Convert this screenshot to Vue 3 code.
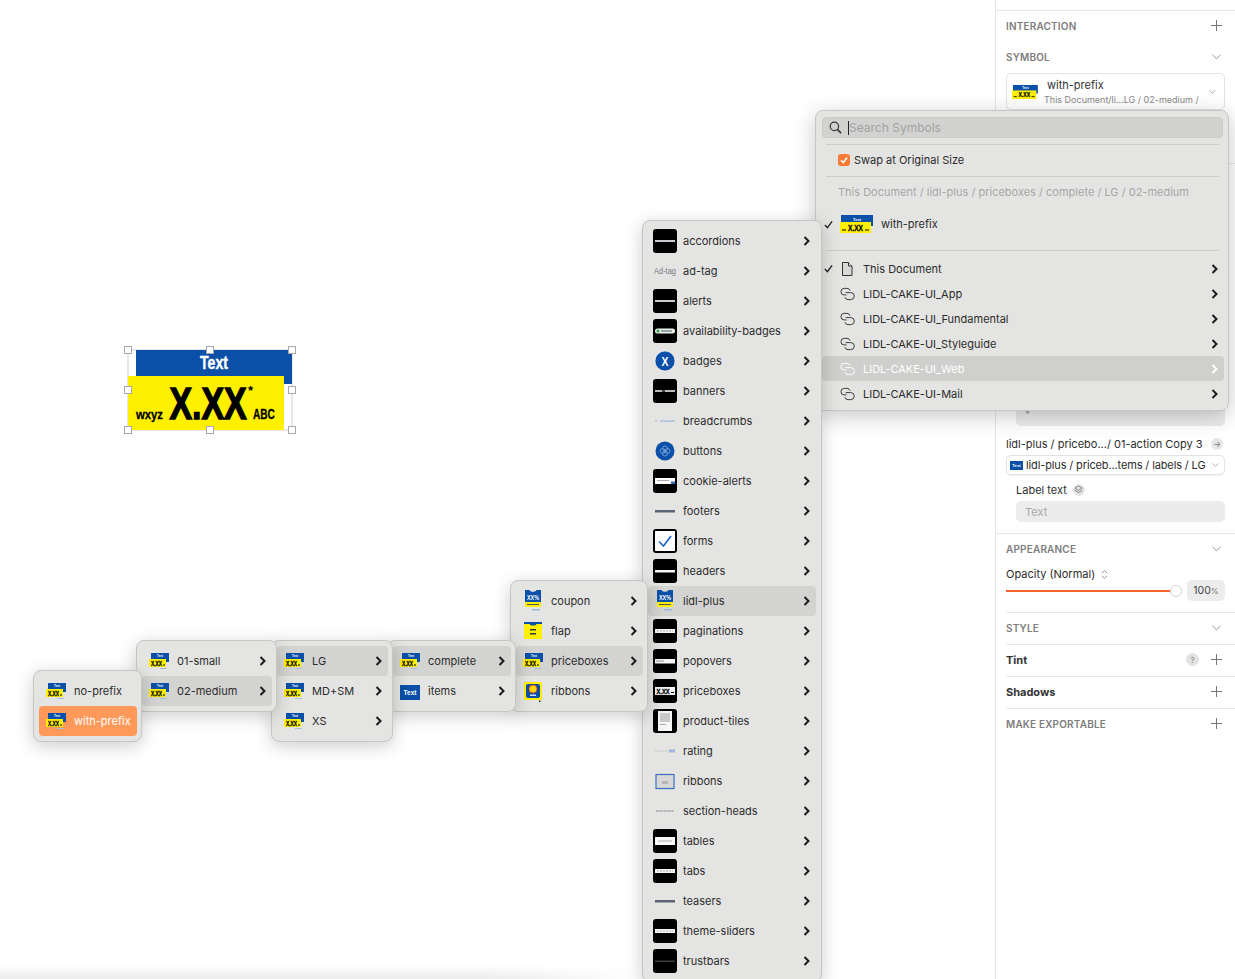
<script setup>
const menus = [
  { cls: 'm6', items: [
    ['accordions', 'blk-line'], ['ad-tag', 'adtag'], ['alerts', 'blk-line'], ['availability-badges', 'blk-badge'],
    ['badges', 'circle-x'], ['banners', 'blk-banner'], ['breadcrumbs', 'crumbs'], ['buttons', 'circle-btn'],
    ['cookie-alerts', 'blk-cookie'], ['footers', 'bar'], ['forms', 'blk-check'], ['headers', 'blk-head'],
    ['lidl-plus', 'coupon', true], ['paginations', 'blk-dash'], ['popovers', 'blk-pop'], ['priceboxes', 'blk-price'],
    ['product-tiles', 'blk-tile'], ['rating', 'rating'], ['ribbons', 'frame'], ['section-heads', 'sect'],
    ['tables', 'blk-table'], ['tabs', 'blk-dash'], ['teasers', 'bar'], ['theme-sliders', 'blk-dash'], ['trustbars', 'blk-dark'],
  ] },
  { cls: 'm5', items: [['coupon', 'coupon'], ['flap', 'flap'], ['priceboxes', 'pb', true], ['ribbons', 'ribbon']] },
  { cls: 'm4', items: [['complete', 'pb', true], ['items', 'label']] },
  { cls: 'm3', items: [['LG', 'pb', true], ['MD+SM', 'pb'], ['XS', 'pb']] },
  { cls: 'm2', items: [['01-small', 'pb'], ['02-medium', 'pb', true]] },
]
const libraries = ['LIDL-CAKE-UI_App', 'LIDL-CAKE-UI_Fundamental', 'LIDL-CAKE-UI_Styleguide', 'LIDL-CAKE-UI_Web', 'LIDL-CAKE-UI-Mail']
const handles = [[8, 8], [90, 8], [172, 8], [8, 48], [172, 48], [8, 88], [90, 88], [172, 88]]
</script>

<template>
  <div class="screen">
    <svg class="defs" aria-hidden="true">
      <symbol id="pb" viewBox="0 0 24 24">
        <rect x="4" y="4" width="18" height="9" fill="#0a50a8" />
        <text x="13" y="8.400" font-size="3" fill="#fff" text-anchor="middle" font-family="Liberation Sans" font-weight="700">Text</text>
        <rect x="2" y="10" width="17" height="8" fill="#fff000" />
        <text x="9.500" y="16.600" font-size="6.500" fill="#000" stroke="#000" stroke-width=".3" text-anchor="middle" font-family="Liberation Sans" font-weight="700" textLength="11" lengthAdjust="spacingAndGlyphs">X.XX</text>
        <rect x="16" y="15.500" width="2" height="1" fill="#000" />
        <rect x="13" y="19" width="7" height="1" fill="#a9bfdf" />
      </symbol>
      <symbol id="pbw" viewBox="0 0 33 18">
        <rect x="1" y="0" width="32" height="11" fill="#0a50a8" />
        <text x="17" y="5.500" font-size="4" fill="#fff" text-anchor="middle" font-family="Liberation Sans" font-weight="700">Text</text>
        <rect x="0" y="7" width="31" height="11" fill="#fff000" />
        <text x="15.500" y="16" font-size="9" fill="#000" stroke="#000" stroke-width=".3" text-anchor="middle" font-family="Liberation Sans" font-weight="700" textLength="15" lengthAdjust="spacingAndGlyphs">X.XX</text>
        <rect x="2" y="14.500" width="4" height="1" fill="#000" />
        <rect x="25" y="14.500" width="4" height="1" fill="#000" />
      </symbol>
      <symbol id="coupon" viewBox="0 0 24 24">
        <path d="M4 1h4.500c.6 2.400 6.400 2.400 7 0H20v14H4z" fill="#0a50a8" />
        <text x="12" y="11" font-size="6.500" fill="#fff" text-anchor="middle" font-family="Liberation Sans" font-weight="700" textLength="12" lengthAdjust="spacingAndGlyphs">XX%</text>
        <rect x="4" y="13" width="16" height="5" fill="#fff000" />
        <rect x="6" y="15" width="12" height="1" fill="#555" />
        <rect x="11" y="20" width="8" height="1.500" fill="#9db7dc" />
      </symbol>
      <symbol id="flap" viewBox="0 0 24 24">
        <rect x="3" y="3" width="18" height="17" fill="#fff000" />
        <path d="M3 3h18v2h-5.500c-.6 2-6.400 2-7 0H3z" fill="#0a50a8" />
        <rect x="9" y="10" width="6" height="1.500" fill="#333" />
        <rect x="9" y="14" width="6" height="1.500" fill="#333" />
      </symbol>
      <symbol id="ribbon" viewBox="0 0 24 24">
        <rect x="3" y="3" width="18" height="18" rx="1" fill="#fff000" />
        <rect x="5" y="5" width="14" height="14" rx="2" fill="#0a50a8" />
        <circle cx="12" cy="10" r="4" fill="#ffd800" stroke="#d22" stroke-width=".6" />
        <rect x="9" y="15.500" width="6" height="1.500" fill="#cfe0f5" />
        <rect x="18" y="21.500" width="1.500" height="1.500" fill="#222" />
      </symbol>
      <symbol id="label" viewBox="0 0 24 24">
        <rect x="2" y="6" width="20" height="15" fill="#0a50a8" />
        <text x="12" y="15.500" font-size="6.500" fill="#fff" text-anchor="middle" font-family="Liberation Sans" font-weight="700">Text</text>
      </symbol>
      <symbol id="adtag" viewBox="0 0 24 24">
        <text x="12" y="15" font-size="8.500" fill="#77797f" text-anchor="middle" font-family="Liberation Sans" textLength="22" lengthAdjust="spacingAndGlyphs">Ad-tag</text>
      </symbol>
      <symbol id="blk-line" viewBox="0 0 24 24">
        <rect width="24" height="24" rx="3" fill="#000" />
        <rect x="2" y="11" width="20" height="2" fill="#c9cbd0" />
      </symbol>
      <symbol id="blk-badge" viewBox="0 0 24 24">
        <rect width="24" height="24" rx="3" fill="#000" />
        <rect x="2" y="9.500" width="20" height="5" rx="2.500" fill="#eaf3ea" />
        <circle cx="5" cy="12" r="1.500" fill="#2d9a52" />
        <rect x="8" y="11.500" width="11" height="1" fill="#456" />
      </symbol>
      <symbol id="blk-banner" viewBox="0 0 24 24">
        <rect width="24" height="24" rx="3" fill="#000" />
        <rect x="2" y="11" width="20" height="2" fill="#bbb" />
        <rect x="9" y="11" width="3" height="2" fill="#444" />
      </symbol>
      <symbol id="blk-cookie" viewBox="0 0 24 24">
        <rect width="24" height="24" rx="3" fill="#000" />
        <rect x="2" y="9" width="20" height="6" fill="#fff" />
        <rect x="4" y="11" width="12" height="1" fill="#aaa" />
        <rect x="18" y="12.500" width="4" height="2.500" fill="#3a70b8" />
      </symbol>
      <symbol id="blk-check" viewBox="0 0 24 24">
        <rect width="24" height="24" rx="3" fill="#000" />
        <rect x="2" y="2" width="20" height="20" fill="#fff" />
        <path d="M6 12.500l4.500 4.500L18 7" fill="none" stroke="#1864c8" stroke-width="1.600" />
      </symbol>
      <symbol id="blk-head" viewBox="0 0 24 24">
        <rect width="24" height="24" rx="3" fill="#000" />
        <rect x="2" y="11" width="20" height="2.500" fill="#f4f4f4" />
      </symbol>
      <symbol id="blk-dash" viewBox="0 0 24 24">
        <rect width="24" height="24" rx="3" fill="#000" />
        <rect x="2" y="10" width="20" height="4" fill="#f4f4f4" />
        <path d="M4 12h16" stroke="#999" stroke-width=".8" stroke-dasharray="2 1" />
      </symbol>
      <symbol id="blk-pop" viewBox="0 0 24 24">
        <rect width="24" height="24" rx="3" fill="#000" />
        <rect x="2" y="10" width="20" height="4.500" fill="#f4f4f4" />
        <rect x="3" y="11.500" width="8" height="1" fill="#999" />
      </symbol>
      <symbol id="blk-price" viewBox="0 0 24 24">
        <rect width="24" height="24" rx="3" fill="#000" />
        <rect x="2" y="8" width="20" height="8" fill="#f4f4f4" />
        <text x="10" y="14.500" font-size="6.500" fill="#000" stroke="#000" stroke-width=".3" text-anchor="middle" font-family="Liberation Sans" font-weight="700" textLength="13" lengthAdjust="spacingAndGlyphs">X.XX</text>
        <rect x="18" y="13" width="3" height="1" fill="#000" />
      </symbol>
      <symbol id="blk-tile" viewBox="0 0 24 24">
        <rect width="24" height="24" rx="3" fill="#000" />
        <rect x="5" y="2" width="14" height="20" fill="#f6f6f6" />
        <rect x="7" y="4" width="10" height="9" fill="#c9c9c9" />
        <rect x="7" y="15" width="6" height="1" fill="#aaa" />
      </symbol>
      <symbol id="blk-table" viewBox="0 0 24 24">
        <rect width="24" height="24" rx="3" fill="#000" />
        <rect x="2" y="8" width="20" height="8" fill="#f8f8f8" />
        <rect x="5" y="11.500" width="14" height="1" fill="#aaa" />
      </symbol>
      <symbol id="blk-dark" viewBox="0 0 24 24">
        <rect width="24" height="24" rx="3" fill="#000" />
        <rect x="2" y="11.500" width="20" height="1.500" fill="#3c3c3c" />
      </symbol>
      <symbol id="circle-x" viewBox="0 0 24 24">
        <circle cx="12" cy="12" r="10" fill="#0a50a8" stroke="#fff" stroke-width=".6" />
        <text x="12" y="16.500" font-size="12" fill="#fff" text-anchor="middle" font-family="Liberation Sans" font-weight="700" textLength="7" lengthAdjust="spacingAndGlyphs">X</text>
      </symbol>
      <symbol id="circle-btn" viewBox="0 0 24 24">
        <circle cx="12" cy="12" r="9.500" fill="#0a50a8" />
        <circle cx="12" cy="9.500" r="2.500" fill="none" stroke="#7ea6dc" stroke-width=".8" />
        <circle cx="12" cy="14.500" r="2.500" fill="none" stroke="#7ea6dc" stroke-width=".8" />
        <circle cx="9.500" cy="12" r="2.500" fill="none" stroke="#7ea6dc" stroke-width=".8" />
        <circle cx="14.500" cy="12" r="2.500" fill="none" stroke="#7ea6dc" stroke-width=".8" />
      </symbol>
      <symbol id="crumbs" viewBox="0 0 24 24">
        <rect x="2" y="11.500" width="2" height="1.200" fill="#b9bcc2" />
        <rect x="7" y="11.500" width="15" height="1.200" fill="#9db7dc" />
      </symbol>
      <symbol id="bar" viewBox="0 0 24 24">
        <rect x="2" y="11" width="20" height="2.500" fill="#5a6472" />
      </symbol>
      <symbol id="rating" viewBox="0 0 24 24">
        <path d="M2 12h13" stroke="#c0c2c8" stroke-width="1" stroke-dasharray="1.500 1" />
        <rect x="16" y="10.500" width="6" height="3" fill="#9db7dc" />
      </symbol>
      <symbol id="frame" viewBox="0 0 24 24">
        <rect x="3" y="5.500" width="18" height="14" fill="#d8d8d8" stroke="#3a70b8" stroke-width="1.200" />
        <rect x="9" y="12" width="6" height="3" fill="#b5b5b5" />
      </symbol>
      <symbol id="sect" viewBox="0 0 24 24">
        <path d="M3 12h18" stroke="#85878c" stroke-width="1.200" stroke-dasharray="2 .6" />
      </symbol>
      <symbol id="chev" viewBox="0 0 8 10">
        <path d="M1.500 1l4 4-4 4" fill="none" stroke="currentColor" stroke-width="2" />
      </symbol>
      <symbol id="link" viewBox="0 0 16 14">
        <path d="M7 8H4.500a3.500 3.500 0 0 1 0-7h3a3.500 3.500 0 0 1 3.300 2.400" fill="none" stroke="currentColor" stroke-width="1" />
        <path d="M6 5.500h5.500a3.750 3.750 0 0 1 0 7.500h-3a3.500 3.500 0 0 1-3.300-2.500" fill="none" stroke="currentColor" stroke-width="1" />
      </symbol>
      <symbol id="plus" viewBox="0 0 11 11">
        <path d="M5.500 0v11M0 5.500h11" fill="none" stroke="currentColor" stroke-width="1" />
      </symbol>
      <symbol id="down" viewBox="0 0 10 6">
        <path d="M.5.500L5 5 9.500.500" fill="none" stroke="currentColor" stroke-width="1" />
      </symbol>
      <symbol id="tick" viewBox="0 0 10 10">
        <path d="M1 5.500l2.800 3L9 1.500" fill="none" stroke="currentColor" stroke-width="1.500" />
      </symbol>
    </svg>

    <main class="canvas">
      <svg class="artboard" width="190" height="100" viewBox="0 0 190 100">
        <rect x="8" y="8" width="164" height="80" fill="#fff" stroke="#cfcfcf" />
        <rect x="16" y="8" width="156" height="34" fill="#0a50a8" />
        <text transform="translate(94 27) scale(.78 1)" font-size="18" fill="#fff" stroke="#fff" stroke-width=".4" text-anchor="middle" font-family="Liberation Sans" font-weight="700">Text</text>
        <rect x="8" y="34" width="156" height="54" fill="#fff000" />
        <text transform="translate(88 77) scale(.77 1)" font-size="44" fill="#000" stroke="#000" stroke-width="1.400" text-anchor="middle" font-family="Liberation Sans" font-weight="700">X.XX</text>
        <text transform="translate(16 77) scale(.87 1)" font-size="13" fill="#000" stroke="#000" stroke-width=".3" font-family="Liberation Sans" font-weight="700">wxyz</text>
        <text transform="translate(133 77) scale(.72 1)" font-size="14" fill="#000" stroke="#000" stroke-width=".3" font-family="Liberation Sans" font-weight="700">ABC</text>
        <text x="128" y="53" font-size="13" fill="#000" font-family="Liberation Sans" font-weight="700">*</text>
        <rect v-for="(h, i) in handles" :key="i" :x="h[0] - 3.500" :y="h[1] - 3.500" width="7" height="7" fill="#fff" stroke="#a8a8a8" />
      </svg>
      <div class="floor"></div>
    </main>

    <aside class="panel">
      <div class="sec first row"><span class="head">Interaction</span><svg class="plus"><use href="#plus" /></svg></div>
      <div class="sec-sym">
        <div class="row sym-head"><span class="head">Symbol</span><svg class="down"><use href="#down" /></svg></div>
        <div class="sym-box">
          <svg class="sym-thumb"><use href="#pbw" /></svg>
          <div class="sym-text"><span class="sym-name">with-prefix</span><span class="sym-path">This Document/li...LG / 02-medium /</span></div>
          <svg class="mini-down"><use href="#down" /></svg>
        </div>
      </div>
      <div class="hidden-sec">
        <div class="star-box">*</div>
      </div>
      <div class="over">
        <div class="over-row"><span>lidl-plus / pricebo.../ 01-action Copy 3</span><span class="round">→</span></div>
        <div class="over-select">
          <svg class="lab-thumb" viewBox="2 6 20 15" preserveAspectRatio="none"><use href="#label" width="24" height="24" /></svg>
          <span class="over-val">lidl-plus / priceb...tems / labels / LG</span>
          <svg class="mini-down"><use href="#down" /></svg>
        </div>
        <div class="label-row"><span>Label text</span>
          <span class="round"><svg class="layers" viewBox="0 0 10 10"><path d="M5 1l4 2.500-4 2.500-4-2.500zM1 6l4 2.500L9 6" fill="none" stroke="#777" stroke-width="1" /></svg></span>
        </div>
        <div class="text-input">Text</div>
      </div>
      <div class="appear">
        <div class="row app-head"><span class="head">Appearance</span><svg class="down"><use href="#down" /></svg></div>
        <div class="opacity">Opacity (Normal)
          <svg class="updown" viewBox="0 0 8 12"><path d="M1 4.500L4 1.500l3 3M1 7.500l3 3 3-3" fill="none" stroke="#888" stroke-width="1" /></svg>
        </div>
        <div class="slider-row">
          <div class="track"><span class="knob"></span></div>
          <div class="percent">100<small>%</small></div>
        </div>
      </div>
      <div class="sec row"><span class="head">Style</span><svg class="down"><use href="#down" /></svg></div>
      <div class="sec row"><span class="strong">Tint</span><span class="right"><span class="help">?</span><svg class="plus"><use href="#plus" /></svg></span></div>
      <div class="sec row"><span class="strong">Shadows</span><svg class="plus"><use href="#plus" /></svg></div>
      <div class="sec row"><span class="head">Make Exportable</span><svg class="plus"><use href="#plus" /></svg></div>
    </aside>

    <section class="popover">
      <div class="search">
        <svg class="lens" viewBox="0 0 14 14"><circle cx="5.800" cy="5.800" r="4.500" fill="none" stroke="#333" stroke-width="1.300" /><path d="M9 9l4 4" stroke="#333" stroke-width="1.700" /></svg>
        <i class="caret"></i><span>Search Symbols</span>
      </div>
      <div class="rule"></div>
      <div class="swap">
        <span class="checkbox"><svg viewBox="0 0 12 12"><path d="M3 6.200l2.200 2.300L9.200 3.500" fill="none" stroke="#fff" stroke-width="1.500" /></svg></span>
        Swap at Original Size
      </div>
      <div class="rule"></div>
      <div class="crumb">This Document / lidl-plus / priceboxes / complete / LG / 02-medium</div>
      <div class="current">
        <svg class="tick"><use href="#tick" /></svg>
        <svg class="cur-thumb"><use href="#pbw" /></svg>
        <span>with-prefix</span>
      </div>
      <div class="rule r3"></div>
      <div class="lib doc">
        <svg class="tick"><use href="#tick" /></svg>
        <svg class="lib-icon" viewBox="0 0 15 14"><path d="M2.500.500h6l3.500 3.500v9.500H2.500z" fill="#d9d9d8" stroke="#333" stroke-width="1" /><path d="M8.500.500V4H12" fill="#e8e8e7" stroke="#333" stroke-width="1" /></svg>
        <span class="grow">This Document</span>
        <svg class="chev"><use href="#chev" /></svg>
      </div>
      <div v-for="l in libraries" :key="l" class="lib" :class="{ hot: l.endsWith('_Web') }">
        <svg class="lib-icon"><use href="#link" /></svg>
        <span class="grow">{{ l }}</span>
        <svg class="chev"><use href="#chev" /></svg>
      </div>
    </section>

    <nav v-for="m in menus" :key="m.cls" class="menu" :class="m.cls">
      <div v-for="it in m.items" :key="it[0]" class="item" :class="{ on: it[2] }">
        <svg class="thumb"><use :href="'#' + it[1]" /></svg>
        <span class="grow">{{ it[0] }}</span>
        <svg class="chev"><use href="#chev" /></svg>
      </div>
    </nav>

    <nav class="menu m1">
      <div class="item leaf"><svg class="thumb"><use href="#pb" /></svg><span>no-prefix</span></div>
      <div class="item leaf picked"><svg class="thumb"><use href="#pb" /></svg><span>with-prefix</span></div>
    </nav>
  </div>
</template>

<style>
html, body { margin: 0; background: #fff; overflow: hidden; }
</style>

<style scoped>
.screen {
  position: relative; display: flex; width: 1235px; height: 979px; overflow: hidden; background: #fff;
  font-family: Inter, "Liberation Sans", sans-serif; font-size: 11px; color: #2c2c2c;
}
.defs { display: none; }
.canvas { position: relative; flex: 1; }
.artboard { position: absolute; left: 120px; top: 342px; }
.floor { position: absolute; left: 0; width: 640px; bottom: 0; height: 14px; background: linear-gradient(0deg, rgba(0,0,0,.08), rgba(0,0,0,0)); -webkit-mask-image: linear-gradient(90deg, #000 75%, transparent); mask-image: linear-gradient(90deg, #000 75%, transparent); }

.panel { width: 240px; box-sizing: border-box; border-left: 1px solid #e6e6e6; padding-top: 10px; }
.row { display: flex; align-items: center; justify-content: space-between; }
.sec { height: 32px; box-sizing: border-box; margin-left: 10px; padding: 0 13px 2px 0; border-top: 1px solid #e8e8e8; }
.sec.first { margin-left: 0; padding-left: 10px; }
.head { font-size: 10px; font-weight: 600; letter-spacing: .18px; color: #7d7d7d; text-transform: uppercase; }
.strong { font-weight: 700; font-size: 11px; color: #333; }
.plus { width: 11px; height: 11px; color: #777; }
.down { width: 9px; height: 6px; color: #888; margin-right: 1px; }
.sym-head .down, .app-head .down { margin-right: 4px; }
.mini-down { width: 7px; height: 4px; color: #888; flex: none; }
.right { display: flex; align-items: center; gap: 12px; }
.help { width: 13px; height: 13px; border-radius: 50%; background: #e2e2e2; color: #8a8a8a; font-size: 8px; display: flex; align-items: center; justify-content: center; }

.sec-sym { padding: 0 10px; height: 122px; box-sizing: border-box; border-bottom: 1px solid #e8e8e8; }
.sym-head { height: 31px; box-sizing: border-box; padding-bottom: 2px; }
.sym-box { height: 37px; box-sizing: border-box; border: 1px solid #e3e3e3; border-radius: 5px; display: flex; align-items: center; padding: 0 8px 0 5px; box-shadow: 0 1px 1px rgba(0,0,0,.05); }
.sym-thumb { width: 26px; height: 14px; flex: none; }
.sym-text { flex: 1; display: flex; flex-direction: column; margin-left: 6px; gap: 2px; white-space: nowrap; }
.sym-name { margin-left: 3px; font-size: 11px; color: #333; }
.sym-path { font-size: 9px; color: #888; }

.hidden-sec { height: 262px; display: flex; flex-direction: column; justify-content: flex-end; padding: 0 10px 0 20px; box-sizing: border-box; }
.star-box { height: 40px; background: #ececec; border-radius: 5px; color: #999; padding: 22px 0 0 9px; box-sizing: border-box; font-size: 10px; }

.over { padding: 10px 10px 0; height: 108px; box-sizing: border-box; border-bottom: 1px solid #e8e8e8; }
.over-row { display: flex; align-items: center; justify-content: space-between; height: 16px; font-size: 11px; white-space: nowrap; padding-right: 2px; }
.round { width: 12px; height: 12px; border-radius: 50%; background: #e6e6e6; color: #777; font-size: 8px; display: inline-flex; align-items: center; justify-content: center; flex: none; }
.over-select { margin-top: 3px; height: 20px; box-sizing: border-box; border: 1px solid #e2e2e2; border-radius: 5px; display: flex; align-items: center; padding: 0 5px 0 3px; box-shadow: 0 1px 1px rgba(0,0,0,.05); white-space: nowrap; }
.lab-thumb { width: 13px; height: 9px; flex: none; }
.over-val { flex: 1; margin-left: 3px; letter-spacing: -.13px; }
.label-row { margin: 6px 0 0 10px; height: 17px; display: flex; align-items: center; gap: 6px; }
.layers { width: 9px; height: 9px; }
.text-input { margin: 3px 0 0 10px; height: 21px; background: #ececec; border-radius: 5px; color: #a9a9a9; padding-left: 9px; display: flex; align-items: center; }

.appear { padding: 0 10px; height: 78px; box-sizing: border-box; }
.app-head { height: 31px; box-sizing: border-box; padding-bottom: 1px; }
.opacity { height: 18px; display: flex; align-items: center; gap: 6px; }
.updown { width: 7px; height: 11px; }
.slider-row { display: flex; align-items: center; margin-top: -3px; }
.track { position: relative; width: 170px; height: 2px; background: #f4622a; }
.knob { position: absolute; right: -6px; top: -5px; width: 12px; height: 12px; background: #fff; border: 1px solid #d5d5d5; box-sizing: border-box; border-radius: 50%; }
.percent { margin-left: 11px; width: 38px; height: 21px; background: #ececec; border-radius: 5px; display: flex; align-items: center; justify-content: center; color: #444; font-size: 10.500px; }
.percent small { font-size: 8px; color: #777; }

.popover {
  position: absolute; left: 815px; top: 110px; width: 414px; height: 301px; box-sizing: border-box;
  padding: 6px 4px 6px 6px; background: #e4e4e3; border: 1px solid #c6c6c5; border-radius: 8px; box-shadow: 0 5px 22px rgba(0,0,0,.22);
}
.search { display: flex; align-items: center; height: 21px; margin-right: 1px; background: #d2d2d1; border-radius: 4px; border: 1px solid #cbcbca; box-sizing: border-box; color: #a3a3a3; font-size: 12px; }
.lens { width: 13px; height: 13px; margin-left: 6px; }
.caret { width: 1px; height: 14px; background: #222; margin: 0 0 0 6px; }
.rule { height: 1px; background: #cdcdcc; margin: 6px 5px 0 4px; }
.swap { height: 31px; box-sizing: border-box; padding: 0 0 1px 16px; display: flex; align-items: center; gap: 4px; }
.checkbox { width: 12px; height: 12px; border-radius: 3px; background: #fb7a32; display: block; flex: none; }
.checkbox svg { width: 12px; height: 12px; display: block; }
.swap + .rule { margin-top: 0; }
.crumb { height: 31px; box-sizing: border-box; padding: 0 0 1px 16px; display: flex; align-items: center; color: #a7a7a7; }
.current { height: 33px; box-sizing: border-box; padding: 0 0 1px 18px; display: flex; align-items: center; position: relative; gap: 8px; }
.tick { position: absolute; left: 2px; top: 50%; margin-top: -5px; width: 9px; height: 9px; color: #222; }
.cur-thumb { width: 33px; height: 18px; flex: none; }
.r3 { margin-top: 9px; }
.lib { position: relative; height: 25px; display: flex; align-items: center; padding: 0 5px 0 18px; gap: 8px; }
.lib.doc { margin-top: 5px; }
.lib.hot { background: #cfcfce; border-radius: 4px; color: #fff; }
.lib-icon { width: 15px; height: 14px; flex: none; color: #333; }
.lib.hot .lib-icon { color: #fff; }
.grow { flex: 1; white-space: nowrap; }
.chev { width: 8px; height: 10px; flex: none; color: #1c1c1c; }
.lib.hot .chev { color: #fff; }

.menu {
  position: absolute; box-sizing: border-box; padding: 5px 4px 5px 5px; background: #e4e4e3;
  border: 1px solid #c6c6c5; border-radius: 8px; box-shadow: 0 4px 18px rgba(0,0,0,.2);
}
.item { height: 30px; display: flex; align-items: center; padding: 0 5px; border-radius: 4px; gap: 6px; white-space: nowrap; }
.item.on { background: #d3d3d2; }
.thumb { width: 24px; height: 24px; flex: none; }
.leaf.picked { background: #ff9959; color: #fff; }
.m1 { left: 33px; top: 670px; width: 109px; }
.m2 { left: 136px; top: 640px; width: 141px; }
.m3 { left: 271px; top: 640px; width: 122px; }
.m4 { left: 387px; top: 640px; width: 129px; }
.m5 { left: 510px; top: 580px; width: 138px; }
.m6 { left: 642px; top: 220px; width: 180px; padding-right: 5px; }
</style>
